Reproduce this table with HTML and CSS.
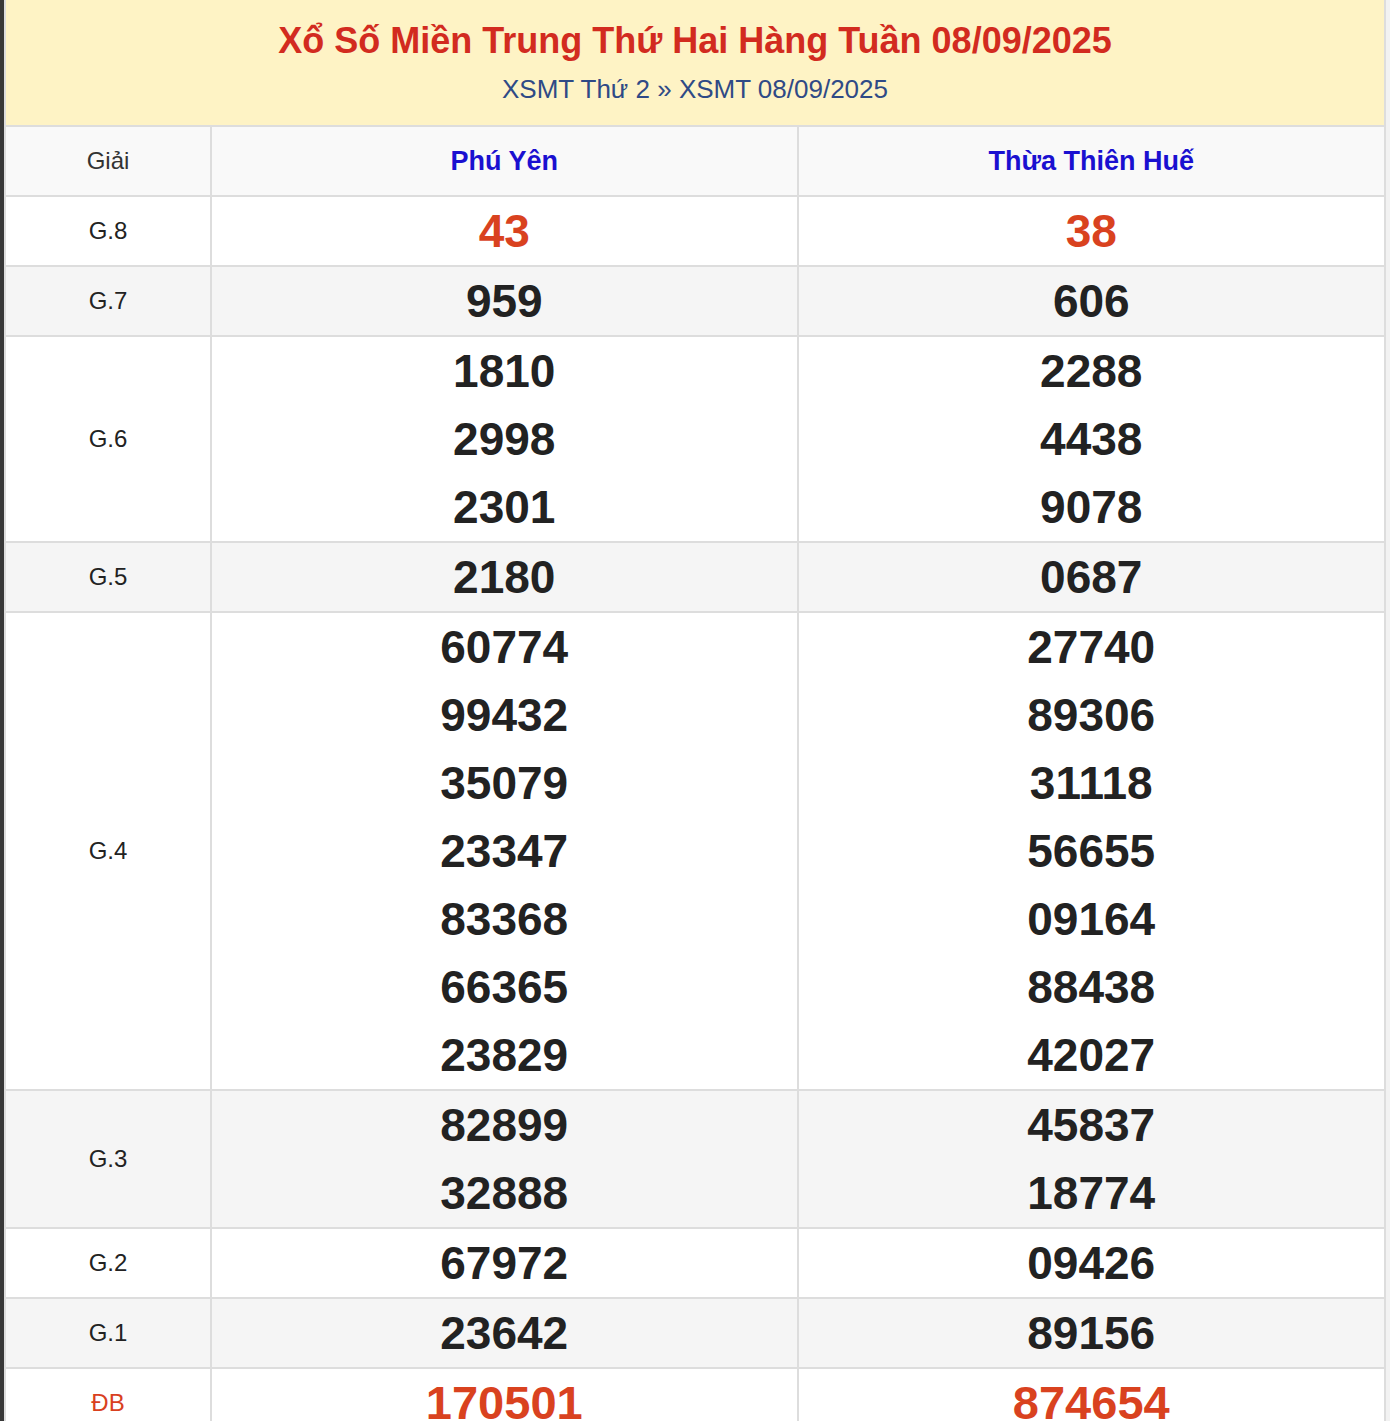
FILE: index.html
```html
<!DOCTYPE html>
<html lang="vi">
<head>
<meta charset="utf-8">
<title>XSMT 08/09/2025</title>
<link rel="stylesheet" href="styles.css">
</head>
<body>
<div class="frame">
  <div class="board">
    <div class="head">
      <h1 class="title">Xổ Số Miền Trung Thứ Hai Hàng Tuần 08/09/2025</h1>
      <div class="crumbs"><span>XSMT Thứ 2</span> <span class="sep">»</span> <span>XSMT 08/09/2025</span></div>
    </div>
    <table class="results">
      <colgroup>
        <col class="c-prize">
        <col class="c-prov">
        <col class="c-prov">
      </colgroup>
      <thead>
        <tr>
          <th class="prize">Giải</th>
          <th class="prov">Phú Yên</th>
          <th class="prov">Thừa Thiên Huế</th>
        </tr>
      </thead>
      <tbody>
        <tr class="w">
          <td class="prize">G.8</td>
          <td><div class="num red">43</div></td>
          <td><div class="num red">38</div></td>
        </tr>
        <tr class="g">
          <td class="prize">G.7</td>
          <td><div class="num">959</div></td>
          <td><div class="num">606</div></td>
        </tr>
        <tr class="w">
          <td class="prize">G.6</td>
          <td><div class="num">1810</div><div class="num">2998</div><div class="num">2301</div></td>
          <td><div class="num">2288</div><div class="num">4438</div><div class="num">9078</div></td>
        </tr>
        <tr class="g">
          <td class="prize">G.5</td>
          <td><div class="num">2180</div></td>
          <td><div class="num">0687</div></td>
        </tr>
        <tr class="w">
          <td class="prize">G.4</td>
          <td><div class="num">60774</div><div class="num">99432</div><div class="num">35079</div><div class="num">23347</div><div class="num">83368</div><div class="num">66365</div><div class="num">23829</div></td>
          <td><div class="num">27740</div><div class="num">89306</div><div class="num">31118</div><div class="num">56655</div><div class="num">09164</div><div class="num">88438</div><div class="num">42027</div></td>
        </tr>
        <tr class="g">
          <td class="prize">G.3</td>
          <td><div class="num">82899</div><div class="num">32888</div></td>
          <td><div class="num">45837</div><div class="num">18774</div></td>
        </tr>
        <tr class="w">
          <td class="prize">G.2</td>
          <td><div class="num">67972</div></td>
          <td><div class="num">09426</div></td>
        </tr>
        <tr class="g">
          <td class="prize">G.1</td>
          <td><div class="num">23642</div></td>
          <td><div class="num">89156</div></td>
        </tr>
        <tr class="w">
          <td class="prize db">ĐB</td>
          <td><div class="num red big">170501</div></td>
          <td><div class="num red big">874654</div></td>
        </tr>
      </tbody>
    </table>
  </div>
</div>
</body>
</html>
```
FILE: styles.css
```css
html, body {
  margin: 0;
  padding: 0;
  background: #ffffff;
}
body {
  font-family: "Liberation Sans", Arial, sans-serif;
  color: #222;
}
.frame {
  border-left: 4px solid #383838;
  border-right: 4px solid #f2f2f2;
  min-height: 1421px;
  box-sizing: border-box;
}
.board {
  border-left: 2px solid #dddddd;
  border-right: 2px solid #dddddd;
}
.head {
  background: #fef3c5;
  height: 127px;
  box-sizing: border-box;
  padding-top: 18px;
  text-align: center;
  border-bottom: 2px solid #dddddd;
}
.title {
  margin: 0;
  font-size: 36px;
  line-height: 46px;
  font-weight: bold;
  color: #d22b1f;
}
.crumbs {
  margin-top: 8px;
  font-size: 26px;
  line-height: 34px;
  color: #2f4a86;
}
.results {
  width: 100%;
  border-collapse: collapse;
  table-layout: fixed;
}
.c-prize { width: 205px; }
.results th,
.results td {
  border: 2px solid #dddddd;
  padding: 0;
  text-align: center;
  vertical-align: middle;
}
.results tr > :first-child { border-left: none; }
.results tr > :last-child { border-right: none; }
.results thead th { border-top: none; }
.results thead tr {
  background: #f9f9f9;
  height: 69px;
}
.results th.prize {
  font-weight: normal;
  font-size: 24px;
  color: #333;
}
.results th.prov {
  font-weight: bold;
  font-size: 27px;
  color: #1a10d0;
}
.results tr.w { background: #ffffff; }
.results tr.g { background: #f5f5f5; }
.results td.prize {
  font-size: 24px;
  color: #222;
}
.results td.db { color: #d9401f; }
.num {
  font-size: 46px;
  line-height: 68px;
  font-weight: bold;
  color: #222;
}
.num.red { color: #d9421f; }
.num.big { font-size: 47px; }
```
